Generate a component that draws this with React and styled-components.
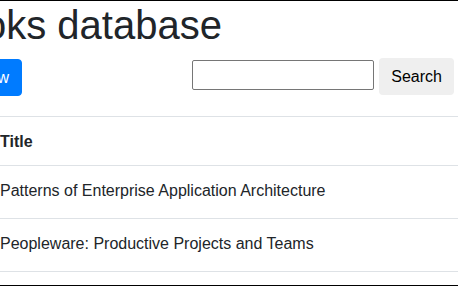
import styled, { createGlobalStyle } from "styled-components";

const GlobalStyle = createGlobalStyle`
  html, body {
    margin: 0;
    padding: 0;
    background: #fff;
    overflow: hidden;
  }
  body {
    font-family: "Liberation Sans", Arial, sans-serif;
    color: #212529;
  }
`;

const Frame = styled.div`
  width: 458px;
  height: 286px;
  box-sizing: border-box;
  border-top: 1px solid #000;
  border-bottom: 1px solid #000;
  overflow: hidden;
`;

const Page = styled.div`
  width: 540px;
  margin-left: -36px;
`;

const Heading = styled.h1`
  margin: 0 0 9px -29px;
  font-size: 40px;
  font-weight: 400;
  line-height: 48px;
  color: #212529;
  white-space: nowrap;
`;

const Toolbar = styled.div`
  display: flex;
  justify-content: space-between;
  align-items: flex-start;
  padding-right: 50px;
  margin-bottom: 20px;
`;

const NewButton = styled.button`
  margin-top: 1px;
  height: 37px;
  padding: 0 12px;
  border: 1px solid #007bff;
  border-radius: 4px;
  background: #007bff;
  color: #fff;
  font-family: inherit;
  font-size: 16px;
`;

const SearchForm = styled.form`
  display: flex;
  align-items: flex-start;
  gap: 5px;
  margin: 0;
`;

const SearchInput = styled.input`
  margin-top: 2px;
  width: 182px;
  height: 30px;
  box-sizing: border-box;
  border: 1px solid #767676;
  border-radius: 2px;
  padding: 0 4px;
  font-family: inherit;
  font-size: 16px;
`;

const SearchButton = styled.button`
  height: 37px;
  padding: 1px 12px 0;
  border: none;
  border-radius: 4px;
  background: #efefef;
  color: #000;
  font-family: inherit;
  font-size: 16px;
`;

const Table = styled.table`
  width: 100%;
  border-collapse: collapse;
  color: #212529;
`;

const HeadCell = styled.th`
  text-align: left;
  font-weight: 700;
  font-size: 16px;
  line-height: 24px;
  padding: 13px 12px 11px 36px;
  border-top: 1px solid #dee2e6;
  border-bottom: 1px solid #dee2e6;
`;

const Cell = styled.td`
  font-size: 16px;
  line-height: 24px;
  padding: 13px 12px 15px 36px;
  border-bottom: 1px solid #dee2e6;
`;

const books = [
  "Patterns of Enterprise Application Architecture",
  "Peopleware: Productive Projects and Teams",
];

export default function App() {
  return (
    <>
      <GlobalStyle />
      <Frame>
        <Page>
          <Heading>Books database</Heading>
          <Toolbar>
            <NewButton>New</NewButton>
            <SearchForm onSubmit={(e) => e.preventDefault()}>
              <SearchInput type="text" />
              <SearchButton type="submit">Search</SearchButton>
            </SearchForm>
          </Toolbar>
          <Table>
            <thead>
              <tr>
                <HeadCell>Title</HeadCell>
              </tr>
            </thead>
            <tbody>
              {books.map((title) => (
                <tr key={title}>
                  <Cell>{title}</Cell>
                </tr>
              ))}
            </tbody>
          </Table>
        </Page>
      </Frame>
    </>
  );
}
